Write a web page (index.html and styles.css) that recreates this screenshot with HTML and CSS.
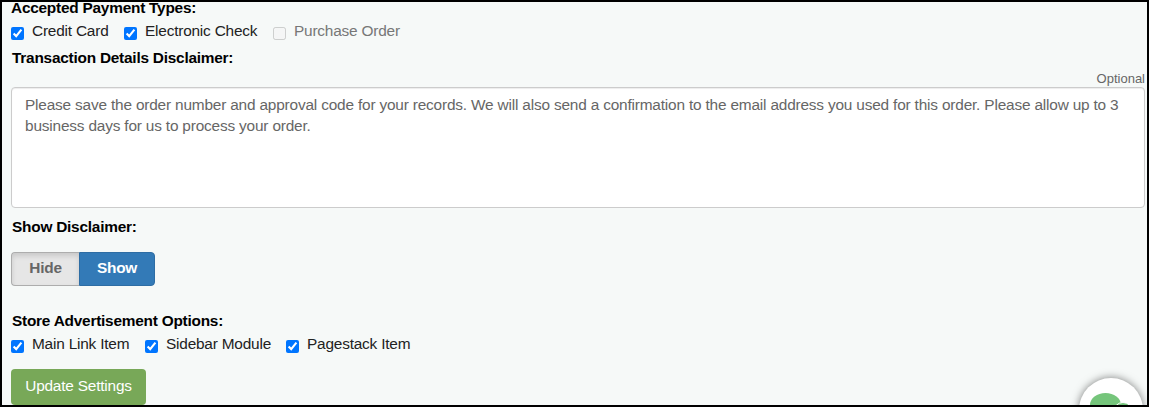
FILE: index.html
```html
<!DOCTYPE html>
<html lang="en">
<head>
  <meta charset="utf-8">
  <title>Store Settings</title>
  <meta name="viewport" content="width=device-width, initial-scale=1">
  <link rel="stylesheet" href="styles.css">
</head>
<body>
  <form class="settings">
    <div class="title first">Accepted Payment Types:</div>
    <div class="checks">
      <label style="width: 113px"><input type="checkbox" checked> <span>Credit Card</span></label>
      <label style="width: 149px"><input type="checkbox" checked> <span>Electronic Check</span></label>
      <label class="disabled"><input type="checkbox" disabled> <span>Purchase Order</span></label>
    </div>

    <div class="title disclaimer-title">Transaction Details Disclaimer:</div>
    <div class="optional">Optional</div>
    <textarea class="disclaimer">Please save the order number and approval code for your records. We will also send a confirmation to the email address you used for this order. Please allow up to 3 business days for us to process your order.</textarea>

    <div class="title show-title">Show Disclaimer:</div>
    <div class="toggle">
      <button type="button" class="hide">Hide</button>
      <button type="button" class="show">Show</button>
    </div>

    <div class="title">Store Advertisement Options:</div>
    <div class="checks">
      <label style="width: 134px"><input type="checkbox" checked> <span>Main Link Item</span></label>
      <label style="width: 141px"><input type="checkbox" checked> <span>Sidebar Module</span></label>
      <label><input type="checkbox" checked> <span>Pagestack Item</span></label>
    </div>

    <button type="button" class="update">Update Settings</button>
  </form>

  <div class="chat">
    <div class="chat-circle">
      <svg width="64" height="64" viewBox="0 0 64 64">
        <ellipse cx="26.500" cy="27" rx="15.500" ry="12" fill="#75c57b"/>
        <circle cx="44" cy="34" r="9.500" fill="#75c57b" stroke="#fff" stroke-width="1"/>
      </svg>
    </div>
  </div>
</body>
</html>
```

FILE: styles.css
```css
* {
  box-sizing: border-box;
}

body {
  position: relative;
  height: 407px;
  margin: 0;
  border: 2px solid #000;
  overflow: hidden;
  background-color: #f6f9f8;
  color: #222;
  font-family: "Liberation Sans", Arial, sans-serif;
  font-size: 15.4px;
  letter-spacing: -0.2px;
}

.settings {
  height: 403px;
  padding: 0 2px 0 9px;
  overflow: hidden;
}

.title {
  height: 22px;
  padding-left: 1px;
  color: #000;
  font-weight: bold;
  letter-spacing: -0.23px;
  line-height: 22px;
}

.first {
  margin-top: -5px;
  padding-left: 0;
}

.checks {
  display: flex;
  height: 24px;
  line-height: 24px;
}

.checks label {
  display: flex;
  white-space: nowrap;
}

.checks input {
  width: 13px;
  height: 13px;
  margin: 8px 8px 0 0;
}

.checks .disabled {
  color: #777;
}

.disclaimer-title {
  margin-top: 4px;
}

.optional {
  height: 18px;
  color: #666;
  font-size: 13px;
  letter-spacing: 0;
  line-height: 20px;
  text-align: right;
}

.disclaimer {
  display: block;
  width: 100%;
  height: 121px;
  padding: 6px 13px;
  border: 1px solid #ccc;
  border-radius: 4px;
  box-shadow: inset 0 1px 1px rgba(0, 0, 0, 0.075);
  background-color: #fff;
  color: #666;
  font-family: inherit;
  font-size: inherit;
  letter-spacing: -0.18px;
  line-height: 21px;
  resize: none;
}

.show-title {
  margin-top: 8px;
}

.toggle {
  display: flex;
  margin: 14px 0 24px;
}

.toggle button {
  height: 34px;
  padding: 0 0 2px;
  font-family: inherit;
  font-size: inherit;
  font-weight: bold;
  letter-spacing: -0.2px;
}

.toggle .hide {
  width: 68px;
  border: 1px solid #adadad;
  border-right: 0;
  border-radius: 4px 0 0 4px;
  box-shadow: inset 0 3px 5px rgba(0, 0, 0, 0.125);
  background-color: #e6e6e6;
  color: #666;
}

.toggle .show {
  width: 76px;
  border: 1px solid #2e6da4;
  border-radius: 0 4px 4px 0;
  background-color: #337ab7;
  color: #fff;
}

.update {
  display: block;
  width: 135px;
  height: 36px;
  margin-top: 13px;
  padding: 0 0 2px;
  border: 0;
  border-radius: 4px;
  background-color: #78a858;
  color: #fff;
  font-family: inherit;
  font-size: inherit;
  letter-spacing: -0.2px;
}

/* only the top of the chat bubble shows above the bottom edge */
.chat {
  position: absolute;
  right: 0;
  bottom: 0;
  width: 80px;
  height: 42px;
  padding: 15px 0 0 12px;
  overflow: hidden;
}

.chat-circle {
  width: 64px;
  height: 64px;
  border-radius: 50%;
  box-shadow: 0 0 8px rgba(0, 0, 0, 0.5);
  background-color: #fff;
}

.chat-circle svg {
  display: block;
}
```
